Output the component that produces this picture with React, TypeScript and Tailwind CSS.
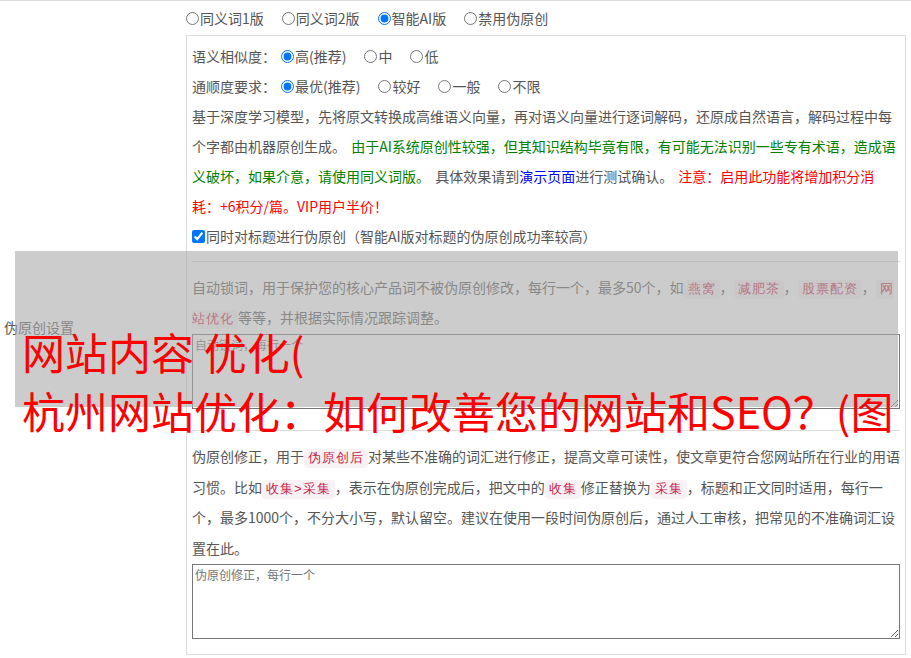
import React from "react"

const tag = "rounded-[4px] bg-[#f9f2f4] px-1 py-[2px] text-[13px] leading-none tracking-[1px] text-[#c7254e]"

function Radio({ label, checked, first }: { label: string; checked?: boolean; first?: boolean }) {
  return (
    <label className={`flex items-center ${first ? "ml-[5px]" : ""} mr-[18px]`}>
      <input type="radio" defaultChecked={checked} className="m-0 mr-[1px] h-[13px] w-[13px]" />
      {label}
    </label>
  )
}

export default function App() {
  return (
    <div
      className="relative h-[658px] w-[911px] overflow-hidden bg-white text-[14px] text-[#555] [text-spacing-trim:space-all] [word-spacing:2px]"
      style={{ fontFamily: '"Noto Sans CJK SC", "Noto Sans", sans-serif' }}
    >
      <div className="flex border-t border-[#ddd]">
        <div className="flex w-[186px] shrink-0 items-center pl-1">伪原创设置</div>

        <div className="flex-1 pr-[5px]">
          <div className="flex h-[34px] items-center">
            <label className="mr-[18px] flex items-center">
              <input type="radio" name="ver" className="m-0 mr-[1px] h-[13px] w-[13px]" />
              同义词1版
            </label>
            <label className="mr-[18px] flex items-center">
              <input type="radio" name="ver" className="m-0 mr-[1px] h-[13px] w-[13px]" />
              同义词2版
            </label>
            <label className="mr-[18px] flex items-center">
              <input type="radio" name="ver" defaultChecked className="m-0 mr-[1px] h-[13px] w-[13px]" />
              智能AI版
            </label>
            <label className="flex items-center">
              <input type="radio" name="ver" className="m-0 mr-[1px] h-[13px] w-[13px]" />
              禁用伪原创
            </label>
          </div>

          <div className="border border-[#ddd] pt-[5px] pb-[15px]">
            <div className="px-[5px] leading-[30px]">
              <div className="flex h-[30px] items-center">
                <span>语义相似度：</span>
                <Radio label="高(推荐)" checked first />
                <Radio label="中" />
                <Radio label="低" />
              </div>
              <div className="flex h-[30px] items-center">
                <span>通顺度要求：</span>
                <Radio label="最优(推荐)" checked first />
                <Radio label="较好" />
                <Radio label="一般" />
                <Radio label="不限" />
              </div>
              <p>
                基于深度学习模型，先将原文转换成高维语义向量，再对语义向量进行逐词解码，还原成自然语言，解码过程中每个字都由机器原创生成。{" "}
                <span className="text-[#008000]">
                  由于AI系统原创性较强，但其知识结构毕竟有限，有可能无法识别一些专有术语，造成语义破坏，如果介意，请使用同义词版。
                </span>{" "}
                具体效果请到<span className="text-[#0000ff]">演示页面</span>进行测试确认。{" "}
                <span className="text-[#ff0000]">注意：启用此功能将增加积分消耗：+6积分/篇。VIP用户半价！</span>
              </p>
              <label className="flex h-[30px] items-center">
                <input type="checkbox" defaultChecked className="m-0 mr-[1px] h-[13px] w-[13px]" />
                同时对标题进行伪原创（智能AI版对标题的伪原创成功率较高）
              </label>
            </div>

            <div className="mx-[5px] mt-[10px] border-t border-[#ddd] pt-[10px]">
              <p className="leading-[30px]">
                自动锁词，用于保护您的核心产品词不被伪原创修改，每行一个，最多50个，如<code className={tag}>燕窝</code>，<code className={tag}>减肥茶</code>，<code className={tag}>股票配资</code>，<code className={tag}>网站优化</code>等等，并根据实际情况跟踪调整。
              </p>
              <textarea
                placeholder="自动锁词，每行一个"
                className="mt-[2px] block h-[75px] w-full border border-[#767676] p-[2px] text-[12px] leading-[16px] placeholder:text-[#757575]"
              />
            </div>

            <div className="mx-[5px] mt-[21px] border-t border-[#ddd] pt-[10px]">
              <p className="leading-[30.7px]">
                伪原创修正，用于<code className={tag}>伪原创后</code>对某些不准确的词汇进行修正，提高文章可读性，使文章更符合您网站所在行业的用语习惯。比如<code className={tag}>收集&gt;采集</code>，表示在伪原创完成后，把文中的<code className={tag}>收集</code>修正替换为<code className={tag}>采集</code>，标题和正文同时适用，每行一个，最多1000个，不分大小写，默认留空。建议在使用一段时间伪原创后，通过人工审核，把常见的不准确词汇设置在此。
              </p>
              <textarea
                placeholder="伪原创修正，每行一个"
                className="block h-[75px] w-full border border-[#767676] p-[2px] text-[12px] leading-[16px] placeholder:text-[#757575]"
              />
            </div>
          </div>
        </div>
      </div>

      <div className="absolute top-[251px] left-[15px] h-[156px] w-[883px] bg-[rgba(170,170,170,0.6)]" />
      <div className="absolute top-[322px] left-[22px] text-[43px] leading-[59px] whitespace-nowrap text-[#ff0000] [word-spacing:0px]">
        网站内容 优化(
        <br />
        杭州网站优化：如何改善您的网站和SEO？(图
      </div>
    </div>
  )
}
